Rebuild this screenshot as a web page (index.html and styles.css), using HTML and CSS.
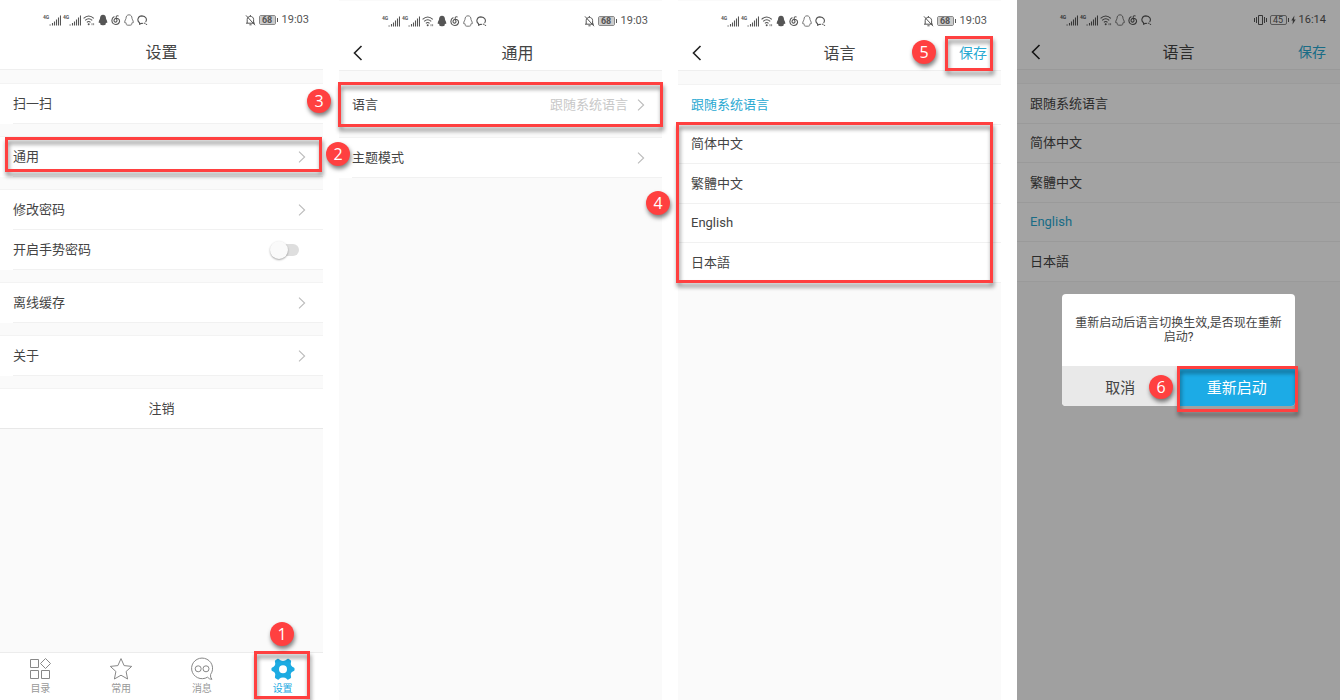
FILE: index.html
```html
<!DOCTYPE html>
<html lang="zh-CN">
<head>
    <meta charset="UTF-8">
    <meta name="viewport" content="width=device-width, initial-scale=1.0">
    <title>语言设置</title>
    <link rel="stylesheet" href="styles.css">
</head>
<body>
    <!-- shared icons -->
    <svg class="sprite" aria-hidden="true">
        <symbol id="signal" viewBox="0 0 12 12">
            <path d="M3.5 9V11.4M5.5 7.6V11.4M7.5 5.6V11.4M9.5 3.6V11.4M11.5 1.4V11.4" stroke="currentColor" stroke-width="1.1" fill="none"/>
            <path d="M.5 10.4h1.2v1H.5z" fill="currentColor"/>
        </symbol>
        <symbol id="wifi" viewBox="0 0 12 12">
            <path d="M.6 4.4Q5.7-.4 10.8 4.4M2.2 6.4Q5.7 3.1 9.2 6.4M3.9 8.4Q5.7 6.6 7.5 8.4" fill="none" stroke="currentColor" stroke-width="1.1"/>
            <circle cx="5.7" cy="10.2" r="1" fill="currentColor"/>
            <path d="M9 9.2v2M10.6 9.2v2" stroke="currentColor" stroke-width=".7"/>
        </symbol>
        <symbol id="penguin" viewBox="0 0 10 12">
            <path d="M5 .8C3 .8 2 2.4 2 4.4 1.9 5.3.7 6.5.7 8.3c0 1 .5.9 1.1.2.2.8.5 1.2.9 1.6-.8.5-.4 1.2 2.3 1.1 2.7.1 3.1-.6 2.3-1.1.4-.4.7-.8.9-1.6.6.7 1.1.8 1.1-.2C9.3 6.5 8.1 5.3 8 4.4 8 2.4 7 .8 5 .8z"/>
        </symbol>
        <symbol id="music" viewBox="0 0 10 12">
            <path d="M3.4 2.6C-.2 4.2 0 10.2 4.8 10.5 9 10.6 9.6 5.7 6.8 4.4 4.6 3.6 2.7 5.3 3.1 7.1c.4 1.5 3 1.3 2.9-.4L5.2 3.4C5 2 6.2 1.2 7.6 2.1" fill="none" stroke="currentColor" stroke-width="1.1"/>
        </symbol>
        <symbol id="chat" viewBox="0 0 11 12">
            <path d="M6 9.3Q5.2 9.5 4.2 9.4L2.6 10.2 2.5 8.8C-.4 6.6.8 2 4.9 1.9 9 2 10.4 5.4 8.6 7.9" fill="none" stroke="currentColor" stroke-width="1.1"/>
            <path d="M6.8 9.2h1.8M8.8 10.4h1.3" fill="none" stroke="currentColor"/>
        </symbol>
        <symbol id="bell" viewBox="0 0 11 12">
            <path d="M2.2 9V5.4C2.2 1.4 8.6 1.4 8.6 5.4V9M1 9.2h9M4.4 10.8h2.2M5.4 1v1.4M1 1.4l9 9.8" fill="none" stroke="currentColor"/>
        </symbol>
        <symbol id="vibrate" viewBox="0 0 13 12">
            <path d="M4.5 1.5h4v9h-4zM2.5 3v6M.5 4v4M10.5 3v6M12.5 4v4" fill="none" stroke="currentColor"/>
        </symbol>
        <symbol id="bolt" viewBox="0 0 5 12">
            <path d="M3.4 1.5L.3 6.6h1.6L1.5 10.5 4.7 5.4H3z" fill="currentColor"/>
        </symbol>
        <symbol id="back" viewBox="0 0 10 16">
            <path d="M8.5 1L1.5 8l7 7" fill="none" stroke="currentColor" stroke-width="1.6"/>
        </symbol>
        <symbol id="chevron" viewBox="0 0 8 12">
            <path d="M1 .7L6.6 6 1 11.3" fill="none" stroke="currentColor" stroke-width="1.1"/>
        </symbol>
    </svg>

    <main class="steps">
        <section class="phone">
            <div class="status">
                <span class="signal">4G<svg><use href="#signal"/></svg></span>
                <span class="signal">4G<svg><use href="#signal"/></svg></span>
                <svg class="i12"><use href="#wifi"/></svg>
                <svg class="i10 solid"><use href="#penguin"/></svg>
                <svg class="i10"><use href="#music"/></svg>
                <svg class="i10 outline"><use href="#penguin"/></svg>
                <svg class="i11"><use href="#chat"/></svg>
                <svg class="i11 push"><use href="#bell"/></svg>
                <span class="battery"><b>68</b></span>
                <time>19:03</time>
            </div>
            <header class="nav"><h1>设置</h1></header>
            <div class="content">
                <div class="group"><a class="row" href="#">扫一扫</a></div>
                <div class="group"><a class="row" href="#">通用<svg class="chevron"><use href="#chevron"/></svg></a></div>
                <div class="group">
                    <a class="row" href="#">修改密码<svg class="chevron"><use href="#chevron"/></svg></a>
                    <label class="row" for="gesture">开启手势密码<input class="switch" id="gesture" type="checkbox"></label>
                </div>
                <div class="group"><a class="row" href="#">离线缓存<svg class="chevron"><use href="#chevron"/></svg></a></div>
                <div class="group"><a class="row" href="#">关于<svg class="chevron"><use href="#chevron"/></svg></a></div>
                <div class="group"><button class="row logout" type="button">注销</button></div>
            </div>
            <nav class="tabs">
                <a href="#">
                    <svg viewBox="0 0 24 24"><path d="M2.5 2.5h8v8h-8zM2.5 13.5h8v8h-8zM13.5 13.5h8v8h-8zM17.5 1.5l5 5-5 5-5-5z"/></svg>
                    目录
                </a>
                <a href="#">
                    <svg viewBox="0 0 24 24"><path d="M12 1.6l3.1 7 7.6.8-5.6 5.1 1.5 7.5-6.6-3.8L5.4 22l1.5-7.5L1.3 9.4l7.6-.8z"/></svg>
                    常用
                </a>
                <a href="#">
                    <svg viewBox="0 0 24 24"><path d="M17.5 20.2A10.5 10.3 0 1 1 20.6 17.4Q19.9 20.4 22 22.3 19.2 22.4 17.5 20.2z"/><circle cx="8.2" cy="11.8" r="3"/><circle cx="16" cy="11.8" r="3"/></svg>
                    消息
                </a>
                <a class="active" href="#">
                    <svg viewBox="0 0 24 24"><path fill-rule="evenodd" d="M6.6 1.8Q7.6 1.4 8.4 2.6 9.6 4 12 4T15.6 2.6Q16.4 1.4 17.4 1.8L19.6 3.2Q20.4 3.8 20 5 19.3 7.2 20.2 8.6 21.2 10 22.8 10.4 23.6 10.6 23.6 12.2 23.6 13.8 22.8 14 21.2 14.4 20.2 15.8 19.3 17.2 20 19.4 20.4 20.6 19.6 21.2L17.4 22.6Q16.4 23 15.6 21.8 14.4 20.4 12 20.4T8.4 21.8Q7.6 23 6.6 22.6L4.4 21.2Q3.6 20.6 4 19.4 4.7 17.2 3.8 15.8 2.8 14.4 1.2 14 .4 13.8.4 12.2.4 10.6 1.2 10.4 2.8 10 3.8 8.6 4.7 7.2 4 5 3.6 3.8 4.4 3.2zM12 8.2a4 4 0 1 0 0 8 4 4 0 0 0 0-8z"/></svg>
                    设置
                </a>
            </nav>
            <div class="mark mark-tab"></div>
            <div class="badge badge-1">1</div>
            <div class="mark mark-general"></div>
            <div class="badge badge-2">2</div>
        </section>

        <section class="phone framed">
            <div class="status">
                <span class="signal">4G<svg><use href="#signal"/></svg></span>
                <span class="signal">4G<svg><use href="#signal"/></svg></span>
                <svg class="i12"><use href="#wifi"/></svg>
                <svg class="i10 solid"><use href="#penguin"/></svg>
                <svg class="i10"><use href="#music"/></svg>
                <svg class="i10 outline"><use href="#penguin"/></svg>
                <svg class="i11"><use href="#chat"/></svg>
                <svg class="i11 push"><use href="#bell"/></svg>
                <span class="battery"><b>68</b></span>
                <time>19:03</time>
            </div>
            <header class="nav nav-sub">
                <button class="back" type="button" aria-label="返回"><svg><use href="#back"/></svg></button>
                <h1>通用</h1>
            </header>
            <div class="content">
                <div class="group"><a class="row" href="#">语言<span class="value">跟随系统语言</span><svg class="chevron"><use href="#chevron"/></svg></a></div>
                <div class="group"><a class="row" href="#">主题模式<svg class="chevron"><use href="#chevron"/></svg></a></div>
            </div>
            <div class="mark mark-language"></div>
            <div class="badge badge-3">3</div>
        </section>

        <section class="phone framed">
            <div class="status">
                <span class="signal">4G<svg><use href="#signal"/></svg></span>
                <span class="signal">4G<svg><use href="#signal"/></svg></span>
                <svg class="i12"><use href="#wifi"/></svg>
                <svg class="i10 solid"><use href="#penguin"/></svg>
                <svg class="i10"><use href="#music"/></svg>
                <svg class="i10 outline"><use href="#penguin"/></svg>
                <svg class="i11"><use href="#chat"/></svg>
                <svg class="i11 push"><use href="#bell"/></svg>
                <span class="battery"><b>68</b></span>
                <time>19:03</time>
            </div>
            <header class="nav">
                <button class="back" type="button" aria-label="返回"><svg><use href="#back"/></svg></button>
                <h1>语言</h1>
                <button class="save" type="button">保存</button>
            </header>
            <div class="content">
                <div class="group options">
                    <button class="row selected" type="button">跟随系统语言</button>
                    <button class="row" type="button">简体中文</button>
                    <button class="row" type="button">繁體中文</button>
                    <button class="row" type="button">English</button>
                    <button class="row" type="button">日本語</button>
                </div>
            </div>
            <div class="mark mark-options"></div>
            <div class="badge badge-4">4</div>
            <div class="mark mark-save"></div>
            <div class="badge badge-5">5</div>
        </section>

        <section class="phone">
            <div class="status">
                <span class="signal">4G<svg><use href="#signal"/></svg></span>
                <span class="signal">4G<svg><use href="#signal"/></svg></span>
                <svg class="i12"><use href="#wifi"/></svg>
                <svg class="i10 outline"><use href="#penguin"/></svg>
                <svg class="i10"><use href="#music"/></svg>
                <svg class="i11"><use href="#chat"/></svg>
                <svg class="i13 push"><use href="#vibrate"/></svg>
                <span class="battery charging"><b>45</b></span>
                <svg class="i5"><use href="#bolt"/></svg>
                <time>16:14</time>
            </div>
            <header class="nav">
                <button class="back" type="button" aria-label="返回"><svg><use href="#back"/></svg></button>
                <h1>语言</h1>
                <button class="save" type="button">保存</button>
            </header>
            <div class="content">
                <div class="group options">
                    <button class="row" type="button">跟随系统语言</button>
                    <button class="row" type="button">简体中文</button>
                    <button class="row" type="button">繁體中文</button>
                    <button class="row selected" type="button">English</button>
                    <button class="row" type="button">日本語</button>
                </div>
            </div>
            <div class="overlay">
                <div class="dialog" role="dialog" aria-labelledby="dialogText">
                    <p id="dialogText">重新启动后语言切换生效,是否现在重新启动?</p>
                    <div class="actions">
                        <button class="cancel" type="button">取消</button>
                        <button class="restart" type="button">重新启动</button>
                    </div>
                    <div class="mark mark-restart"></div>
                    <div class="badge badge-6">6</div>
                </div>
            </div>
        </section>
    </main>
</body>
</html>
```
FILE: styles.css
```css
* {
    box-sizing: border-box;
}
body {
    margin: 0;
    background: #fff;
    color: #444;
    font-family: Roboto, "Noto Sans CJK SC", sans-serif;
    font-size: 13px;
}
button {
    padding: 0;
    border: none;
    background: none;
    color: inherit;
    font: inherit;
    cursor: pointer;
}
a {
    color: inherit;
    text-decoration: none;
}
.sprite {
    position: absolute;
    width: 0;
    height: 0;
}
.steps {
    display: grid;
    grid-template-columns: repeat(4, 1fr);
    gap: 16px;
    min-height: 100vh;
}
.phone {
    position: relative;
    display: flex;
    flex-direction: column;
    background: #fafafa;
}
.framed {
    border-top: 1px solid #fafafa;
}

/* status bar */
.status {
    display: flex;
    align-items: center;
    gap: 3px;
    height: 36px;
    padding: 4px 14px 0 43px;
    background: #fff;
    color: #555;
    font-size: 11px;
    line-height: 16px;
}
.status svg {
    height: 12px;
}
.signal {
    display: flex;
    flex: none;
    width: 17px;
    font-size: 5px;
    font-weight: bold;
    line-height: 6px;
}
.signal svg {
    flex: none;
    width: 12px;
    margin-left: auto;
}
.status .i5 { width: 5px; }
.status .i10 { width: 10px; }
.status .i11 { width: 11px; }
.status .i12 { width: 12px; }
.status .i13 { width: 13px; }
.solid {
    fill: #555;
}
.outline {
    fill: none;
    stroke: #777;
}
.status .push {
    margin-left: auto;
}
.battery {
    position: relative;
    width: 17px;
    height: 10px;
    margin-right: 3px;
    border: 1px solid #888;
    border-radius: 2px;
}
.battery::after {
    content: "";
    position: absolute;
    top: 2px;
    right: -3px;
    width: 1px;
    height: 4px;
    background: #555;
}
.battery b {
    display: block;
    background: #ccc;
    font-size: 9px;
    line-height: 8px;
    text-align: center;
}
.charging {
    margin-right: 1px;
}
.charging b {
    background: none;
    font-weight: normal;
}

/* title bar */
.nav {
    display: grid;
    grid-template-columns: 1fr auto 1fr;
    align-items: center;
    height: 34px;
    padding: 0 14px;
    border-bottom: 1px solid #efefef;
    background: #fff;
}
.nav h1 {
    grid-column: 2;
    margin: 0;
    font-size: 16px;
    font-weight: normal;
    line-height: 24px;
}
.nav-sub h1 {
    padding-left: 34px;
}
.back {
    justify-self: start;
    height: 18px;
    padding-bottom: 2px;
    color: #222;
}
.back svg {
    display: block;
    width: 10px;
    height: 16px;
}
.save {
    justify-self: end;
    padding-bottom: 2px;
    color: #2aa9d2;
    font-size: 14px;
    line-height: 20px;
}

/* lists */
.content {
    display: flex;
    flex-direction: column;
    gap: 13px;
    padding-top: 14px;
}
.group {
    padding-left: 13px;
    background: #fff;
    box-shadow: 0 -1px #f3f3f3;
}
.row {
    display: flex;
    align-items: center;
    width: 100%;
    height: 40px;
    padding-right: 17px;
    border-bottom: 1px solid #f1f1f1;
    line-height: 20px;
    text-align: left;
}
.chevron {
    width: 8px;
    height: 12px;
    margin-left: auto;
    color: #bbb;
}
.value {
    margin-left: auto;
    color: #c8c8c8;
}
.value + .chevron {
    margin-left: 9px;
}
.group:has(.logout),
.options {
    padding-left: 0;
}
.logout {
    justify-content: center;
    padding: 0;
    border-bottom-color: #e8e8e8;
}
.options .row {
    padding-left: 13px;
}
.options .row:nth-child(even) {
    height: 39px;
}
.options .selected {
    color: #2aa9d2;
}
.switch {
    appearance: none;
    position: relative;
    width: 24px;
    height: 12px;
    margin: 0 7px 0 auto;
    border-radius: 6px;
    background: #dedede;
}
.switch::before {
    content: "";
    position: absolute;
    top: -3px;
    left: -5px;
    width: 18px;
    height: 18px;
    border-radius: 50%;
    background: #fafafa;
    box-shadow: 0 1px 2px rgba(0, 0, 0, 0.35);
}

/* bottom tabs */
.tabs {
    display: flex;
    height: 48px;
    margin-top: auto;
    border-top: 1px solid #ececec;
    background: #fff;
}
.tabs a {
    display: flex;
    flex: 1;
    flex-direction: column;
    align-items: center;
    padding-top: 4px;
    color: #999;
    font-size: 10px;
    line-height: 16px;
}
.tabs svg {
    width: 24px;
    height: 24px;
    fill: none;
    stroke: #888;
}
.tabs .active {
    color: #1cabe2;
}
.tabs .active svg {
    fill: #1cabe2;
    stroke: none;
}

/* restart dialog */
.overlay {
    position: absolute;
    inset: 0;
    background: rgba(0, 0, 0, 0.36);
}
.dialog {
    position: absolute;
    top: 294px;
    left: 45px;
    right: 45px;
    border-radius: 4px;
    background: #fff;
}
.dialog p {
    margin: 0;
    padding: 22px 12px;
    font-size: 12px;
    line-height: 14px;
    text-align: center;
}
.actions {
    display: grid;
    grid-template-columns: 1fr 1fr;
    height: 40px;
    overflow: hidden;
    border-radius: 0 0 4px 4px;
    font-size: 15px;
}
.cancel {
    background: #e9e9e9;
}
.restart {
    background: #1cabe6;
    color: #fff;
}

/* numbered callouts */
.mark {
    position: absolute;
    z-index: 2;
    border: 3px solid #ff4040;
    filter: drop-shadow(1px 4px 2px rgba(0, 0, 0, 0.45));
    pointer-events: none;
}
.badge {
    position: absolute;
    z-index: 3;
    width: 24px;
    height: 24px;
    border-radius: 50%;
    background: #ff4040;
    box-shadow: 1px 3px 4px rgba(0, 0, 0, 0.5);
    color: #fff;
    font-family: "Open Sans", sans-serif;
    font-size: 16px;
    font-weight: 500;
    line-height: 24px;
    text-align: center;
}
.mark-tab {
    right: 13px;
    bottom: 1px;
    width: 56px;
    height: 48px;
}
.badge-1 {
    right: 29px;
    bottom: 54px;
}
.mark-general {
    top: 137px;
    left: 5px;
    right: 1px;
    height: 35px;
}
.badge-2 {
    top: 142px;
    right: -27px;
}
.mark-language {
    top: 81px;
    left: -1px;
    right: -1px;
    height: 45px;
}
.badge-3 {
    top: 88px;
    left: -32px;
}
.mark-options {
    top: 121px;
    left: -2px;
    right: 8px;
    height: 161px;
}
.badge-4 {
    top: 190px;
    left: -32px;
}
.mark-save {
    top: 35px;
    right: 8px;
    width: 48px;
    height: 35px;
}
.badge-5 {
    top: 39px;
    right: 65px;
}
.mark-restart {
    right: -3px;
    bottom: -6px;
    width: 121px;
    height: 46px;
}
.badge-6 {
    right: 122px;
    bottom: 7px;
}
```
